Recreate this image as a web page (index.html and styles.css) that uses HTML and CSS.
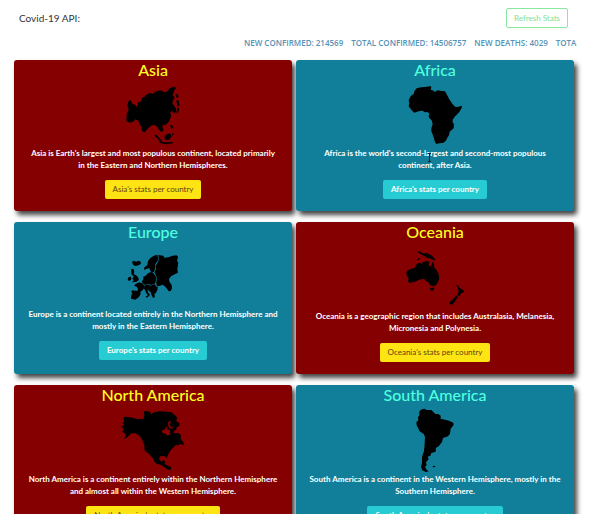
FILE: index.html
```html
<!DOCTYPE html>
<html lang="en">
<head>
<meta charset="utf-8">
<title>Covid-19 API</title>
<link rel="stylesheet" href="styles.css">
</head>
<body>
<header class="topbar">
  <h1 class="brand">Covid-19 API:</h1>
  <button class="refresh" type="button">Refresh Stats</button>
</header>
<div class="ticker">
  <span>New confirmed: 214569</span>
  <span>Total confirmed: 14506757</span>
  <span>New deaths: 4029</span>
  <span>Total deaths: 606159</span>
</div>
<main class="grid">
  <section class="card red">
    <h2>Asia</h2>
    <svg class="map" viewBox="0 0 198 195" aria-hidden="true"><path d="M25 58L32 54L37 66L46 68L49 75L54 70L52 62L62 59L65 48L74 45L78 38L91 33L98 36L105 29L120 25L135 31L143 28L148 19L163 14L168 18L162 26L158 40L164 46L160 53L157 64L163 72L168 80L169 88L164 94L155 87L151 91L153 103L147 119L137 128L126 131L131 145L124 150L116 142L112 134L104 129L95 130L85 138L77 147L76 151L66 148L64 135L58 124L55 116L45 112L42 118L31 122L19 118L20 96L26 84L22 70ZM166 37L173 36L176 45L171 49ZM169 55L175 54L179 69L173 76L171 66ZM171 78L178 79L175 91L168 94L171 87ZM150 131L156 129L160 136L155 141ZM103 160L109 158L118 168L128 179L121 178L111 169ZM134 161L144 155L153 156L154 165L146 174L137 174L134 168ZM115 177L130 181L145 181L160 180L158 184L139 187L121 183ZM157 154L161 154L160 160L156 160Z"/></svg>
    <p>Asia is Earth's largest and most populous continent, located primarily in&nbsp;the Eastern and Northern Hemispheres.</p>
    <a class="btn yellow" href="#asia">Asia's stats per country</a>
  </section>
  <section class="card teal">
    <h2>Africa</h2>
    <svg class="map" viewBox="0 0 198 195" aria-hidden="true"><path d="M44 19L57 16L76 14L85 12L88 16L86 23L95 26L99 30L106 25L119 27L129 28L134 37L142 52L151 65L159 74L167 75L179 71L180 76L172 90L158 104L152 113L152 122L156 126L155 139L143 149L141 160L137 166L131 177L123 183L111 184L103 186L99 180L94 163L88 148L88 139L92 127L89 115L82 108L80 103L82 94L75 90L69 91L61 86L50 88L37 92L29 85L20 73L22 64L20 54L27 41L35 36L37 28Z"/></svg>
    <p>Africa is the world's second-largest and second-most populous continent, after Asia.</p>
    <a class="btn aqua" href="#africa">Africa's stats per country</a>
    <svg class="cursor" viewBox="0 0 5 9" aria-hidden="true"><path d="M1 .5h3M2.500 .5v8M1 8.500h3"/></svg>
  </section>
  <section class="card teal">
    <h2>Europe</h2>
    <svg class="map" viewBox="0 -6 198 192" aria-hidden="true"><path d="M36 47L42 44L48 47L56 44L62 47L63 52L58 57L46 60L39 56ZM34 69L40 68L43 77L41 84L48 88L53 92L57 101L50 107L36 109L42 102L37 99L41 91L34 85ZM25 94L33 92L34 100L28 105L23 102ZM72 65L82 57L84 45L91 36L102 29L112 26L114 38L113 45L110 48L105 57L106 65L102 77L95 80L91 74L88 66L79 69L73 72ZM115 27L130 29L133 35L145 34L158 29L170 28L174 33L171 44L175 50L172 70L174 80L166 84L154 90L147 98L148 107L155 117L156 127L152 135L146 136L141 128L136 122L128 116L118 120L111 121L109 113L110 99L109 90L105 82L103 79L108 69L107 59L112 51L116 43ZM66 106L71 98L69 93L77 89L84 82L91 79L99 80L107 90L108 102L106 112L93 117L82 113L75 117L68 112ZM48 113L59 109L67 112L73 119L71 129L65 135L61 137L62 145L56 154L46 161L33 158L34 148L37 141L33 137L38 133L52 135L54 128L50 122L42 119ZM73 119L82 115L91 119L104 114L108 121L113 123L112 133L107 142L103 144L105 154L99 155L94 146L92 138L87 136L84 129L83 138L89 145L88 150L79 155L77 152L84 148L78 140L76 133L72 129Z"/></svg>
    <p>Europe is a continent located entirely in the Northern Hemisphere and mostly in the Eastern Hemisphere.</p>
    <a class="btn aqua" href="#europe">Europe's stats per country</a>
  </section>
  <section class="card red">
    <h2>Oceania</h2>
    <svg class="map" viewBox="0 -6 198 198" aria-hidden="true"><path d="M47 16L56 17L61 22L75 22L88 28L96 36L102 43L91 41L83 36L76 37L68 30L59 26L51 22ZM44 40L52 36L54 39L47 43ZM68 47L78 45L82 49L80 58L85 62L90 54L92 46L96 55L97 65L104 73L110 84L112 98L108 107L102 118L93 121L83 116L79 109L72 105L66 98L51 101L43 106L31 109L23 111L18 107L20 99L12 83L17 73L29 68L38 65L42 57L51 50L59 53L63 48ZM84 126L97 125L95 132L90 135L85 131ZM162 116L168 118L174 127L184 132L186 138L177 142L172 151L166 148L170 138L168 126ZM162 148L168 153L162 161L158 168L151 176L142 174L143 168L154 160Z"/></svg>
    <p>Oceania is a geographic region that includes Australasia, Melanesia, Micronesia and Polynesia.</p>
    <a class="btn yellow" href="#oceania">Oceania's stats per country</a>
  </section>
  <section class="card red">
    <h2>North America</h2>
    <svg class="map" viewBox="360 96 198 198" aria-hidden="true"><path d="M370 127L379 125L389 127L401 129L414 133L421 131L430 133L433 121L431 110L437 108L451 110L453 118L464 111L481 109L500 110L515 112L524 120L531 127L529 139L539 145L538 153L530 157L529 165L522 167L521 175L535 174L543 181L542 192L551 203L551 211L541 207L534 211L527 210L521 217L513 224L506 235L502 247L498 249L492 242L481 244L477 253L484 260L491 255L496 260L494 268L504 272L514 276L511 286L500 282L492 275L483 269L471 267L462 259L459 249L452 243L444 233L434 228L433 210L429 201L424 189L416 181L407 175L395 175L388 181L379 189L371 191L378 182L375 175L367 171L370 163L365 155L373 150L367 145L373 138Z"/><path d="M503 144L509 137L514 141L508 147L513 155L523 158L510 161L505 154ZM485 167L495 162L499 154L503 163L510 166L511 179L502 182L497 176L488 175Z" class="bay"/></svg>
    <p>North America is a continent entirely within the Northern Hemisphere and almost all within the Western Hemisphere.</p>
    <a class="btn yellow" href="#north-america">North America's stats per country</a>
  </section>
  <section class="card teal">
    <h2>South America</h2>
    <svg class="map" viewBox="336 96 198 198" aria-hidden="true"><path d="M388 109L396 103L404 101L409 105L424 105L431 112L436 117L445 117L452 122L452 131L465 134L477 137L490 143L491 150L482 161L480 176L474 184L459 189L456 201L446 214L438 218L437 230L424 234L421 242L413 245L416 252L408 262L410 270L405 276L410 284L416 289L407 291L397 286L393 276L396 263L396 245L402 228L404 207L405 185L401 177L389 169L380 151L379 142L385 136L384 127L388 121ZM428 274L434 272L436 276L429 277Z"/></svg>
    <p>South America is a continent in the Western Hemisphere, mostly in the Southern Hemisphere.</p>
    <a class="btn aqua" href="#south-america">South America's stats per country</a>
  </section>
</main>
</body>
</html>
```
FILE: styles.css
```css
* { box-sizing: border-box; }
html { height: 100%; overflow: hidden; }
body {
  margin: 0;
  padding: 0 26px 0 14px;
  background: #fff;
  font-family: "Trebuchet MS", Lato, sans-serif;
  font-size: 8px;
}
.topbar {
  display: flex;
  justify-content: space-between;
  align-items: center;
  padding: 8px 6px 0 5px;
}
.brand { margin: 0; font-size: 10px; font-weight: 400; color: #333; }
.refresh {
  height: 20px;
  padding: 0 7px;
  border: 1px solid #8be8a0;
  border-radius: 2px;
  background: #fff;
  color: #7de293;
  font: inherit;
}
.ticker {
  display: flex;
  gap: 8px;
  margin: 9px -3px 0 0;
  padding-left: 230px;
  height: 12px;
  overflow: hidden;
  line-height: 12px;
  font-family: "Trebuchet MS", "Open Sans", sans-serif;
  font-weight: 600;
  color: #5593b8;
  text-transform: uppercase;
  white-space: nowrap;
}
.ticker span { flex: none; }
.grid {
  display: grid;
  grid-template-columns: 1fr 1fr;
  gap: 11px 4px;
  margin-top: 11px;
}
.card {
  position: relative;
  display: flex;
  flex-direction: column;
  align-items: center;
  padding-bottom: 12px;
  border-radius: 3px;
  box-shadow: 3px 4px 5px #444;
  color: #fff;
  text-align: center;
}
.red { background: #850000; }
.teal { background: #117f99; }
.card h2 {
  margin: 0 0 2px;
  font-size: 16px;
  font-weight: 500;
  line-height: 20px;
}
.red h2 { color: #ff2; }
.teal h2 { color: #4fffe0; }
.map { display: block; width: 66px; }
.bay { fill: #850000; }
.card p { margin: 0 11px 9px; font-weight: 700; line-height: 12px; }
.btn {
  padding: 0 8px;
  border-radius: 2px;
  line-height: 19px;
  text-decoration: none;
}
.yellow { background: #ffe414; color: #5c4210; }
.aqua { background: #27ccd2; color: #fff; font-weight: 700; }
.cursor {
  position: absolute;
  top: 93px;
  left: 131px;
  width: 5px;
  height: 9px;
  fill: none;
  stroke: #123;
  pointer-events: none;
}
```
